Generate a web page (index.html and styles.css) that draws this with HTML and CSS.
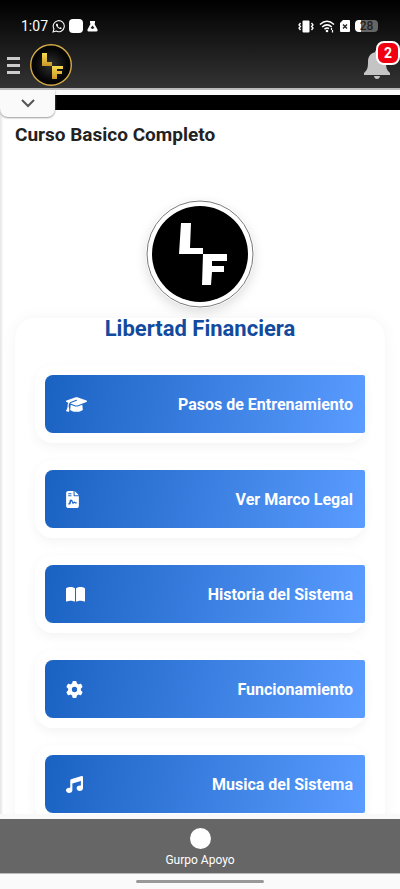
FILE: index.html
```html
<!DOCTYPE html>
<html lang="es">
<head>
<meta charset="utf-8">
<meta name="viewport" content="width=device-width, initial-scale=1">
<title>Libertad Financiera</title>
<link rel="stylesheet" href="styles.css">
</head>
<body>
<header class="top">
  <div class="status">
    <div class="status-group">
      <span class="clock">1:07</span>
      <svg width="13" height="13" viewBox="0 0 24 24" fill="none" stroke="#fff" stroke-width="2"><path d="M2 22l1.600-5.500a10.200 10.200 0 1 1 4 3.900z"/><path d="M8 7c-1 1-1 3 1.500 6s5.500 4 7 3.500 1.500-2 1-2.300l-2-1-1.500 1.300c-1.500-.5-3-2-3.600-3.300l1-1.200-1-2.500c-.5-1-1.400-.8-2.400-.5z" fill="#fff" stroke="none"/></svg>
      <svg width="14" height="14" viewBox="0 0 14 14"><rect width="14" height="14" rx="4" fill="#fff"/></svg>
      <svg width="11" height="12" viewBox="0 0 11 12"><path fill="#fff" d="M3 1h5v2L7.500 4l3 5.500Q11 11.500 9.500 11.500h-8Q0 11.500 .5 9.500l3-5.500L3 3z"/><path d="M3.500 8L5.500 5.500l2 2.500-2 1z" fill="#222"/></svg>
    </div>
    <div class="status-group">
      <svg width="16" height="13" viewBox="0 0 16 13"><rect x="4.500" y=".5" width="7" height="12" rx="1" fill="#fff"/><path d="M2.500 3L1 5l1.500 1.500L1 8l1.500 2M13.500 3L15 5l-1.500 1.500L15 8l-1.500 2" fill="none" stroke="#fff" stroke-width="1.300"/></svg>
      <svg width="16" height="13" viewBox="0 0 16 13" fill="none" stroke="#fff" stroke-width="1.500"><path d="M1 4.500q7-6.500 14 0M3.200 7q4.800-4.300 9.600 0M5.500 9.200q2.500-2 4.500-.5"/><circle cx="8" cy="11" r="1.300" fill="#fff" stroke="none"/><path d="M12.500 8v2M13.500 10v2.500" stroke-width="1.200"/></svg>
      <svg width="10" height="12" viewBox="0 0 10 12"><path d="M3 0h6q1 0 1 1v10q0 1-1 1H1q-1 0-1-1V3z" fill="#fff"/><path d="M3 4.500l4 4M7 4.500l-4 4" stroke="#222" stroke-width="1.400"/></svg>
      <span class="battery">28</span>
    </div>
  </div>
  <div class="appbar">
    <button class="icon-btn" aria-label="Menu">
      <svg width="13" height="17" viewBox="0 0 13 17" fill="#ccc"><path d="M0 0h13v3H0zM0 7h13v3H0zM0 14h13v3H0z"/></svg>
    </button>
    <svg class="brand" width="42" height="42" viewBox="0 0 42 42" role="img" aria-label="LF">
      <defs>
        <radialGradient id="disc"><stop offset="0" stop-color="#303030"/><stop offset=".8" stop-color="#050505"/></radialGradient>
        <linearGradient id="gold" x2="0" y2="1"><stop offset="0" stop-color="#f7dc50"/><stop offset="1" stop-color="#c99525"/></linearGradient>
      </defs>
      <circle cx="21" cy="21" r="20.300" fill="url(#disc)" stroke="#d6ad45" stroke-width="1.400"/>
      <path fill="url(#gold)" d="M12 9h5v9h5v4H12z"/>
      <path fill="url(#gold)" d="M22 22h11v3h-6v2h5v3h-5v5h-5z"/>
    </svg>
    <button class="icon-btn bell" aria-label="Notificaciones">
      <svg width="26" height="30" viewBox="0 0 26 30" fill="#c4c4c4"><path d="M13 0q2 0 2 2.300c5 1 7 5 7 9.500 0 6 .5 8 4 11.200V25H0v-2c3.500-3.200 4-5.200 4-11.200 0-4.500 2-8.500 7-9.500Q11 0 13 0zM10 26h6q-.5 3-3 3t-3-3z"/></svg>
      <span class="badge">2</span>
    </button>
  </div>
</header>

<main class="content">
  <div class="strip">
    <button class="pull" aria-label="Desplegar">
      <svg width="14" height="9" viewBox="0 0 14 9" fill="none" stroke="#555" stroke-width="2"><path d="M1 1l6 6 6-6"/></svg>
    </button>
  </div>
  <h1>Curso Basico Completo</h1>
  <svg class="logo" width="108" height="108" viewBox="0 0 108 108" role="img" aria-label="LF">
    <circle cx="54" cy="54" r="53" fill="#fff" stroke="#777"/>
    <circle cx="54" cy="54" r="48" fill="#000"/>
    <path fill="#fff" d="M35 23h10l-1 25h13v6H33z"/>
    <path fill="#fff" d="M57 54h24v7H66v5h12v6H66l-1 13h-9z"/>
  </svg>
  <section class="panel">
    <h2>Libertad Financiera</h2>
    <nav class="list">
      <div class="card"><a class="item" href="#">
        <svg height="17" width="21" viewBox="0 0 640 512"><path d="M320 32c-8.100 0-16.100 1.400-23.700 4.100L15.800 137.400C6.300 140.900 0 149.900 0 160s6.300 19.100 15.800 22.600l57.900 20.900C57.300 229.300 48 259.800 48 291.900v28.100c0 28.400-10.800 57.700-22.300 80.800c-6.500 13-13.900 25.800-22.500 37.600C0 442.700-.9 448.300 .9 453.400s6 8.900 11.200 10.200l64 16c4.200 1.100 8.700 .3 12.400-2s6.300-6.100 7.100-10.400c8.600-42.800 4.300-81.200-2.100-108.700C90.300 344.300 86 329.800 80 316.500V291.900c0-30.200 10.200-58.700 27.900-81.500c12.900-15.500 29.600-28 49.200-35.700l157-61.700c8.200-3.200 17.500 .8 20.700 9s-.8 17.500-9 20.700l-157 61.700c-12.400 4.900-23.300 12.400-32.200 21.600l159.600 57.600c7.600 2.700 15.600 4.100 23.700 4.100s16.100-1.400 23.700-4.100L624.200 182.600c9.500-3.400 15.800-12.500 15.800-22.600s-6.300-19.100-15.800-22.600L343.700 36.100C336.100 33.400 328.100 32 320 32zM128 408c0 35.300 86 72 192 72s192-36.700 192-72L496.700 262.600 354.500 314c-11.100 4-22.800 6-34.500 6s-23.500-2-34.500-6L143.300 262.600 128 408z"/></svg>
        <span>Pasos de Entrenamiento</span></a></div>
      <div class="card"><a class="item" href="#">
        <svg height="17" width="13" viewBox="0 0 384 512"><path fill-rule="evenodd" d="M64 0C28.700 0 0 28.700 0 64v384c0 35.300 28.700 64 64 64h256c35.300 0 64-28.700 64-64V160H256c-17.700 0-32-14.300-32-32V0zM256 0v128h128zM64 64h96v32H64zM64 128h96v32H64zM110 270c20-28 64-22 78 12l22 54 18-12c14-9 30-8 42 4l12 12h38v40h-50l-22-20-34 26c-10 6-22 2-26-8l-30-76-28 90c-4 10-12 14-22 14H64v-40h24z"/></svg>
        <span>Ver Marco Legal</span></a></div>
      <div class="card"><a class="item" href="#">
        <svg height="17" width="19" viewBox="0 0 576 512"><path d="M249.600 471.500c10.800 3.800 22.400-4.100 22.400-15.500V78.600c0-4.200-1.600-8.400-5-11C247.400 52 202.400 32 144 32C93.500 32 46.300 45.300 18.100 56.100C6.800 60.500 0 71.700 0 83.800V454.100c0 11.900 12.800 20.200 24.100 16.500C55.600 460.100 105.500 448 144 448c33.900 0 79 14 105.600 23.500zm76.800 0C353 462 398.100 448 432 448c38.500 0 88.400 12.100 119.900 22.600c11.300 3.800 24.100-4.600 24.100-16.500V83.800c0-12.100-6.800-23.300-18.100-27.600C529.700 45.300 482.500 32 432 32c-58.400 0-103.400 20-123 35.600c-3.300 2.600-5 6.800-5 11V456c0 11.400 11.700 19.300 22.400 15.500z"/></svg>
        <span>Historia del Sistema</span></a></div>
      <div class="card"><a class="item" href="#">
        <svg height="17" width="17" viewBox="0 0 512 512"><path d="M495.900 166.600c3.200 8.700 .5 18.400-6.400 24.600l-43.300 39.400c1.100 8.300 1.700 16.800 1.700 25.400s-.6 17.100-1.700 25.400l43.300 39.400c6.900 6.200 9.600 15.900 6.400 24.600c-4.400 11.900-9.700 23.300-15.800 34.300l-4.700 8.100c-6.600 11-14 21.400-22.100 31.200c-5.900 7.200-15.700 9.600-24.500 6.800l-55.700-17.700c-13.400 10.300-28.200 18.900-44 25.400l-12.500 57.100c-2 9.100-9 16.300-18.200 17.800c-13.800 2.300-28 3.500-42.500 3.500s-28.700-1.200-42.500-3.500c-9.200-1.500-16.200-8.700-18.200-17.800l-12.500-57.100c-15.800-6.500-30.600-15.100-44-25.400L83.100 425.900c-8.800 2.800-18.600 .3-24.500-6.800c-8.100-9.800-15.500-20.200-22.100-31.200l-4.700-8.100c-6.100-11-11.400-22.400-15.800-34.300c-3.200-8.700-.5-18.400 6.400-24.600l43.300-39.400C64.600 273.100 64 264.600 64 256s.6-17.100 1.700-25.400L22.400 191.200c-6.900-6.200-9.600-15.900-6.400-24.600c4.400-11.900 9.700-23.300 15.800-34.300l4.700-8.100c6.600-11 14-21.400 22.100-31.200c5.900-7.200 15.700-9.600 24.500-6.800l55.700 17.700c13.400-10.300 28.200-18.900 44-25.400l12.500-57.100c2-9.100 9-16.300 18.200-17.800C227.300 1.200 241.500 0 256 0s28.700 1.200 42.500 3.500c9.200 1.500 16.200 8.700 18.200 17.800l12.500 57.100c15.800 6.500 30.600 15.100 44 25.400l55.700-17.700c8.800-2.800 18.600-.3 24.500 6.800c8.100 9.800 15.500 20.200 22.100 31.200l4.700 8.100c6.100 11 11.400 22.400 15.800 34.300zM256 336a80 80 0 1 0 0-160 80 80 0 1 0 0 160z"/></svg>
        <span>Funcionamiento</span></a></div>
      <div class="card"><a class="item" href="#">
        <svg height="17" width="17" viewBox="0 0 512 512"><path d="M499.100 6.300c8.100 6 12.900 15.600 12.900 25.700v72V368c0 44.200-43 80-96 80s-96-35.800-96-80s43-80 96-80c11.200 0 22 1.600 32 4.600V147L192 223.800V432c0 44.200-43 80-96 80s-96-35.800-96-80s43-80 96-80c11.200 0 22 1.600 32 4.600V200 128c0-14.100 9.300-26.600 22.800-30.700l320-96c9.700-2.900 20.200-1.100 28.300 5z"/></svg>
        <span>Musica del Sistema</span></a></div>
    </nav>
  </section>
</main>

<footer class="bottom">
  <a class="support" href="#"><span class="dot"></span>Gurpo Apoyo</a>
  <div class="gesture"><span></span></div>
</footer>
</body>
</html>
```
FILE: styles.css
```css
* { box-sizing: border-box; }

body {
  margin: 0;
  height: 100vh;
  display: flex;
  flex-direction: column;
  overflow: hidden;
  background: #fafafa;
  color: #222;
  font-family: Roboto, "Liberation Sans", sans-serif;
}

h1, h2 { margin: 0; }
a { text-decoration: none; }
svg { display: block; flex: none; }
button { border: 0; padding: 0; background: none; }

.top {
  flex: none;
  background: linear-gradient(#000, #333);
  border-bottom: 2px solid #bbb;
}

.status {
  display: flex;
  justify-content: space-between;
  padding: 16px 22px 4px 21px;
  height: 40px;
}

.status-group {
  display: flex;
  align-items: center;
  gap: 4px;
}

.status-group + .status-group { gap: 5px; }

.clock {
  color: #fff;
  font-size: 14px;
  font-weight: 400;
}

.battery {
  width: 23px;
  height: 12px;
  border-radius: 4px;
  background: linear-gradient(90deg, #fff 28%, #666 28%);
  color: #222;
  font-size: 12px;
  font-weight: 500;
  line-height: 13px;
  text-align: center;
}

.appbar {
  display: flex;
  align-items: center;
  gap: 10px;
  height: 48px;
  padding: 2px 10px 0 7px;
}

.bell {
  position: relative;
  margin-left: auto;
}

.badge {
  position: absolute;
  top: -9px;
  right: -10px;
  width: 24px;
  height: 24px;
  border: 2px solid #fff;
  border-radius: 8px;
  background: #f00010;
  color: #fff;
  font: 700 14px/20px Roboto, sans-serif;
  text-align: center;
}

.content {
  flex: 1;
  min-height: 0;
  overflow: hidden;
  border-bottom: 5px solid #f9f9f9;
  background: #fff;
  box-shadow: inset 3px 0 2px -1px #e8e8e8;
}

.strip {
  position: relative;
  height: 20px;
  border-top: 5px solid #fafafa;
  background: #000;
}

.pull {
  position: absolute;
  top: -5px;
  left: 0;
  width: 55px;
  height: 27px;
  border-radius: 0 0 8px 8px;
  background: #fafafa;
  box-shadow: 0 1px 2px #999;
  display: flex;
  align-items: center;
  justify-content: center;
}

h1 {
  padding: 12px 15px 0;
  font-size: 19px;
  font-weight: 700;
  line-height: 26px;
}

.logo {
  margin: 52px auto 0;
  border-radius: 50%;
  box-shadow: 0 4px 12px #0002;
}

.panel {
  margin: 10px 15px 0;
  padding: 0 20px 20px;
  border-radius: 20px;
  background: #fff;
  box-shadow: 0 0 16px #0000000c;
}

h2 {
  color: #124b9e;
  font-size: 22px;
  font-weight: 700;
  line-height: 22px;
  text-align: center;
}

.list {
  display: grid;
  gap: 17px;
  margin-top: 25px;
}

.card {
  padding: 10px 0 10px 10px;
  border-radius: 18px;
  background: #fff;
  box-shadow: 0 4px 12px #0000000c;
}

.item {
  display: flex;
  align-items: center;
  justify-content: space-between;
  height: 58px;
  padding: 0 12px 0 21px;
  border-radius: 8px 2px 2px 8px;
  background: linear-gradient(100deg, #1a62c2, #5a9cff);
  color: #fff;
  font-size: 16px;
  font-weight: 700;
}

.item svg { fill: #fff; }

.bottom { flex: none; }

.support {
  display: flex;
  flex-direction: column;
  align-items: center;
  height: 54px;
  padding-top: 9px;
  background: #666;
  color: #fff;
  font-size: 12px;
  line-height: 22px;
}

.dot {
  width: 21px;
  height: 21px;
  border-radius: 50%;
  background: #fff;
}

.gesture {
  display: flex;
  align-items: center;
  justify-content: center;
  height: 16px;
  border-top: 1px solid #bbb;
}

.gesture span {
  width: 32%;
  height: 3px;
  border-radius: 2px;
  background: #999;
}
```
